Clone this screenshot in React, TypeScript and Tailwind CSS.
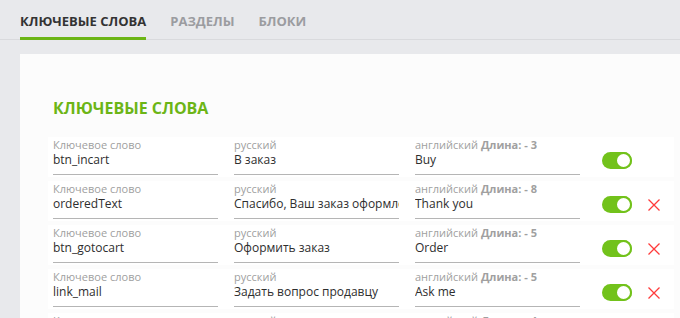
import React from "react";

type Row = { key: string; ru: string; en: string; len: number; del: boolean };

const rows: Row[] = [
  { key: "btn_incart", ru: "В заказ", en: "Buy", len: 3, del: false },
  { key: "orderedText", ru: "Спасибо, Ваш заказ оформлен", en: "Thank you", len: 8, del: true },
  { key: "btn_gotocart", ru: "Оформить заказ", en: "Order", len: 5, del: true },
  { key: "link_mail", ru: "Задать вопрос продавцу", en: "Ask me", len: 5, del: true },
  { key: "btn_more", ru: "Подробнее", en: "More", len: 4, del: true },
];

function Field({ label, value, extra }: { label: string; value: string; extra?: string }) {
  return (
    <div className="w-[165px] shrink-0 pt-[2px] pb-[6px] border-b border-[#b5b5b5] overflow-hidden">
      <div className="text-[11px] leading-[12px] text-[#a0a0a0] whitespace-nowrap">
        {label}
        {extra && <span className="font-bold"> {extra}</span>}
      </div>
      <div className="text-[12px] leading-[17px] text-[#2e2e2e] whitespace-nowrap overflow-hidden">{value}</div>
    </div>
  );
}

function Toggle() {
  return (
    <div className="ml-[22px] mt-[15px] w-[30px] h-[17px] rounded-full bg-[#72c21b] relative shrink-0">
      <div className="absolute right-0 top-0 w-[17px] h-[17px] rounded-full bg-white border-[2px] border-[#72c21b]" />
    </div>
  );
}

function Cross() {
  return (
    <svg className="ml-[16px] mt-[18px] shrink-0" width="12" height="12" viewBox="0 0 12 12">
      <path d="M0.5 0.5 L11.5 11.5 M11.5 0.5 L0.5 11.5" stroke="#ff3b3b" strokeWidth="1.3" fill="none" />
    </svg>
  );
}

export default function App() {
  return (
    <div
      className="w-[680px] h-[318px] overflow-hidden bg-[#e8e9ec]"
      style={{ fontFamily: '"Open Sans", "Noto Sans", sans-serif' }}
    >
      <div className="h-[40px] flex gap-[24px] pl-5 border-b border-[#d9dadd]">
        <div className="h-[40px] -mb-px border-b-[3px] border-[#6cb516] pt-[12px] text-[13px] leading-[18px] font-bold text-[#333]">
          КЛЮЧЕВЫЕ СЛОВА
        </div>
        <div className="pt-[12px] text-[13px] leading-[18px] font-bold text-[#9b9ca0]">РАЗДЕЛЫ</div>
        <div className="pt-[12px] text-[13px] leading-[18px] font-bold text-[#9b9ca0]">БЛОКИ</div>
      </div>
      <div className="ml-5 mt-[14px] bg-[#fcfcfc] pl-[28px] pr-[6px] pt-[43px] h-[400px]">
        <div className="pl-[5px] text-[16px] leading-[22px] font-bold text-[#6cb516] mb-[18px]">КЛЮЧЕВЫЕ СЛОВА</div>
        <div className="flex flex-col gap-[4px]">
          {rows.map((r) => (
            <div key={r.key} className="h-[40px] bg-white pl-[5px] flex items-start">
              <div className="flex gap-4">
                <Field label="Ключевое слово" value={r.key} />
                <Field label="русский" value={r.ru} />
                <Field label="английский" extra={`Длина: - ${r.len}`} value={r.en} />
              </div>
              <Toggle />
              {r.del && <Cross />}
            </div>
          ))}
        </div>
      </div>
    </div>
  );
}
